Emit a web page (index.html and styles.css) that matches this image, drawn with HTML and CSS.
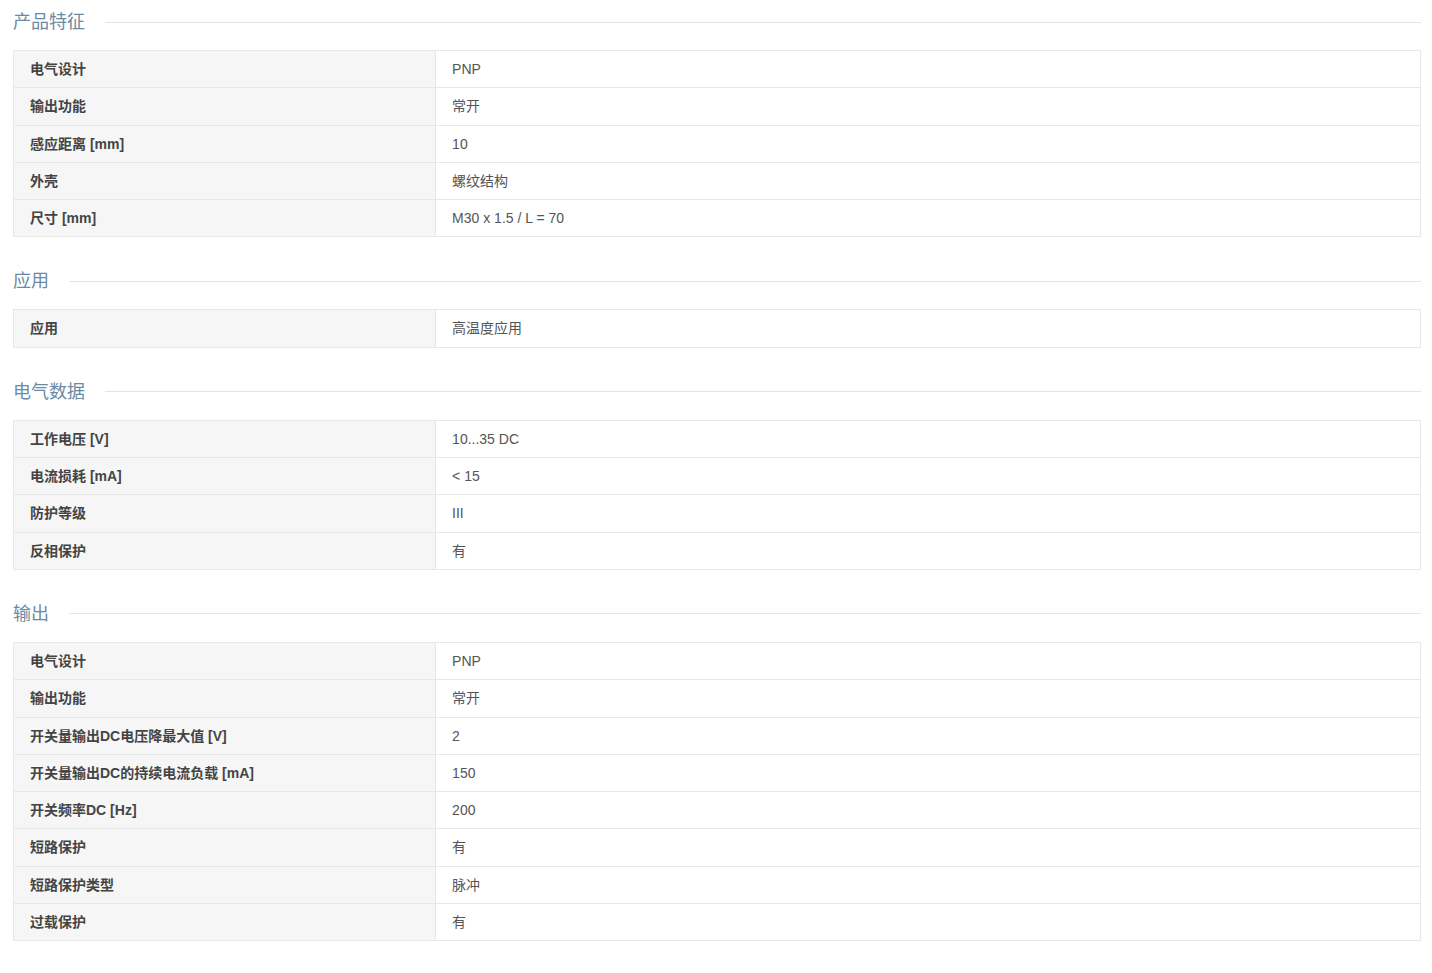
FILE: index.html
```html
<!DOCTYPE html>
<html lang="zh-CN">
<head>
<meta charset="utf-8">
<title>产品参数</title>
<link rel="stylesheet" href="styles.css">
</head>
<body>
<div class="page">
  <section class="group">
    <h2 class="group-title"><span>产品特征</span></h2>
    <table class="spec">
      <tr><th>电气设计</th><td>PNP</td></tr>
      <tr><th>输出功能</th><td>常开</td></tr>
      <tr><th>感应距离 [mm]</th><td>10</td></tr>
      <tr><th>外壳</th><td>螺纹结构</td></tr>
      <tr><th>尺寸 [mm]</th><td>M30 x 1.5 / L = 70</td></tr>
    </table>
  </section>
  <section class="group">
    <h2 class="group-title"><span>应用</span></h2>
    <table class="spec">
      <tr><th>应用</th><td>高温度应用</td></tr>
    </table>
  </section>
  <section class="group">
    <h2 class="group-title"><span>电气数据</span></h2>
    <table class="spec">
      <tr><th>工作电压 [V]</th><td>10...35 DC</td></tr>
      <tr><th>电流损耗 [mA]</th><td>&lt; 15</td></tr>
      <tr><th>防护等级</th><td>III</td></tr>
      <tr><th>反相保护</th><td>有</td></tr>
    </table>
  </section>
  <section class="group">
    <h2 class="group-title"><span>输出</span></h2>
    <table class="spec">
      <tr><th>电气设计</th><td>PNP</td></tr>
      <tr><th>输出功能</th><td>常开</td></tr>
      <tr><th>开关量输出DC电压降最大值 [V]</th><td>2</td></tr>
      <tr><th>开关量输出DC的持续电流负载 [mA]</th><td>150</td></tr>
      <tr><th>开关频率DC [Hz]</th><td>200</td></tr>
      <tr><th>短路保护</th><td>有</td></tr>
      <tr><th>短路保护类型</th><td>脉冲</td></tr>
      <tr><th>过载保护</th><td>有</td></tr>
    </table>
  </section>
</div>
</body>
</html>
```
FILE: styles.css
```css
html, body {
  margin: 0;
  padding: 0;
  background: #fff;
}
body {
  font-family: "Liberation Sans", Arial, "Noto Sans CJK SC", sans-serif;
  font-size: 14px;
  color: #555;
}
.page {
  width: 1408px;
  margin-left: 13px;
  padding-top: 2px;
}
.group + .group {
  margin-top: 24px;
}
.group-title {
  display: flex;
  align-items: center;
  gap: 20px;
  height: 40px;
  margin: 0 0 8px 0;
  font-size: 18px;
  font-weight: normal;
  color: #6b8aa6;
  line-height: 40px;
}
.group-title::after {
  content: "";
  flex: 1;
  height: 1px;
  background: #e4e4e4;
}
.spec {
  width: 100%;
  border-collapse: collapse;
  table-layout: fixed;
}
.spec th, .spec td {
  box-sizing: border-box;
  border: 1px solid #e8e8e8;
  padding: 9px 16px;
  line-height: 18.3px;
  text-align: left;
  vertical-align: middle;
}
.spec th {
  width: 30%;
  background: #f6f6f6;
  font-weight: bold;
  color: #444;
  font-size: 14px;
}
.spec td {
  background: #fff;
  color: #555;
}
```
